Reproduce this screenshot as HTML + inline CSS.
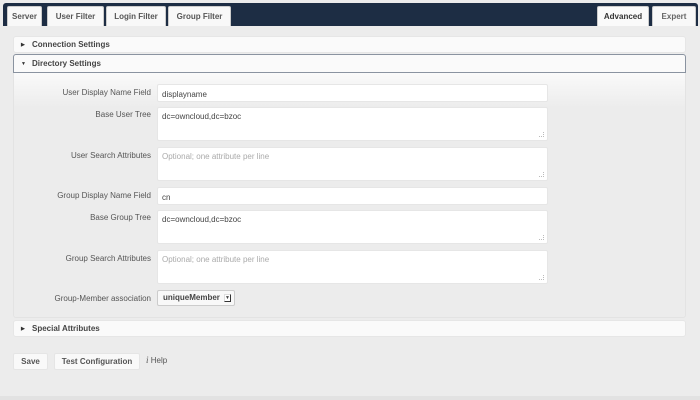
<!DOCTYPE html>
<html><head><style>
*{box-sizing:border-box;margin:0;padding:0}
body{width:700px;height:400px;background:#ececec;font-family:"Liberation Sans",sans-serif;font-size:8px;color:#555;position:relative;overflow:hidden}
.bar{position:absolute;left:3px;top:3px;width:695px;height:23px;background:#1d2d44;border-radius:3px 3px 0 0}
.tab{position:absolute;top:6px;height:20px;background:#f8f8f8;border:1px solid #ccc;border-bottom:none;font-weight:bold;color:#555;font-size:8px;line-height:19px;text-align:center;border-radius:2px 2px 0 0}
.hdr{position:absolute;left:13px;width:673px;background:#fafafa;border:1px solid #e6e6e6;border-radius:3px;font-weight:bold;color:#444;font-size:8px;padding-left:18px}
.hdr i{position:absolute;left:7px;font-style:normal;font-size:5px;color:#333}
.body{position:absolute;left:13px;top:73px;width:673px;height:245px;background:linear-gradient(#fafafa,#ececec 35px);border:1px solid #e3e3e3;border-top:none;border-radius:0 0 3px 3px}
.lbl{position:absolute;right:549px;width:160px;text-align:right;color:#555}
.in{position:absolute;left:157px;width:391px;background:#fff;border:1px solid #e6e6e6;border-radius:2px;padding:6px 4px;color:#444}
.ta{height:34px;padding-top:4px}
.ta:after{content:"";position:absolute;right:3px;bottom:3px;width:4px;height:4px;border-right:1px dotted #bbb;border-bottom:1px dotted #bbb}
.btn{position:absolute;top:353px;height:17px;background:#f9f9f9;border:1px solid #e5e5e5;border-radius:2px;font-weight:bold;color:#555;line-height:15px;text-align:center}
</style></head><body>
<div class="bar"></div>
<div class="tab" style="left:7px;width:35px">Server</div>
<div class="tab" style="left:47px;width:57px">User Filter</div>
<div class="tab" style="left:106px;width:60px">Login Filter</div>
<div class="tab" style="left:168px;width:63px">Group Filter</div>
<div class="tab" style="left:597px;width:52px;color:#333;background:#fafafa">Advanced</div>
<div class="tab" style="left:652px;width:44px;color:#666">Expert</div>

<div class="hdr" style="top:36px;height:17px;line-height:16px"><i>&#9654;</i>Connection Settings</div>
<div class="hdr" style="top:54px;height:19px;line-height:18px;border-color:#8a93a0;border-radius:3px 3px 0 0"><i>&#9660;</i>Directory Settings</div>
<div class="body"></div>

<div class="lbl" style="top:88px">User Display Name Field</div>
<div class="in" style="top:84px;height:18px;padding-top:5px">displayname</div>
<div class="lbl" style="top:110px">Base User Tree</div>
<div class="in ta" style="top:107px">dc=owncloud,dc=bzoc</div>
<div class="lbl" style="top:151px">User Search Attributes</div>
<div class="in ta" style="top:147px;color:#aaa">Optional; one attribute per line</div>
<div class="lbl" style="top:191px">Group Display Name Field</div>
<div class="in" style="top:187px;height:18px;padding-top:5px">cn</div>
<div class="lbl" style="top:213px">Base Group Tree</div>
<div class="in ta" style="top:210px">dc=owncloud,dc=bzoc</div>
<div class="lbl" style="top:254px">Group Search Attributes</div>
<div class="in ta" style="top:250px;color:#aaa">Optional; one attribute per line</div>
<div class="lbl" style="top:294px">Group-Member association</div>
<div style="position:absolute;left:157px;top:290px;width:78px;height:16px;background:#f8f8f8;border:1px solid #ccc;border-radius:2px;font-weight:bold;color:#444;line-height:14px;padding-left:5px">uniqueMember<span style="position:absolute;right:3px;top:3px;width:7px;height:8px;background:#fff;border:1px solid #333;border-top-color:#ddd;border-left-color:#ddd;font-size:5px;line-height:6px;text-align:center">&#9660;</span></div>

<div class="hdr" style="top:320px;height:17px;line-height:16px"><i>&#9654;</i>Special Attributes</div>

<div class="btn" style="left:13px;width:35px">Save</div>
<div class="btn" style="left:54px;width:86px">Test Configuration</div>
<div style="position:absolute;left:146px;top:355px;color:#555"><i style="font-family:'Liberation Serif',serif;font-size:9px">i</i> Help</div>
<div style="position:absolute;left:0;top:396px;width:700px;height:4px;background:#e2e2e2"></div>
</body></html>
